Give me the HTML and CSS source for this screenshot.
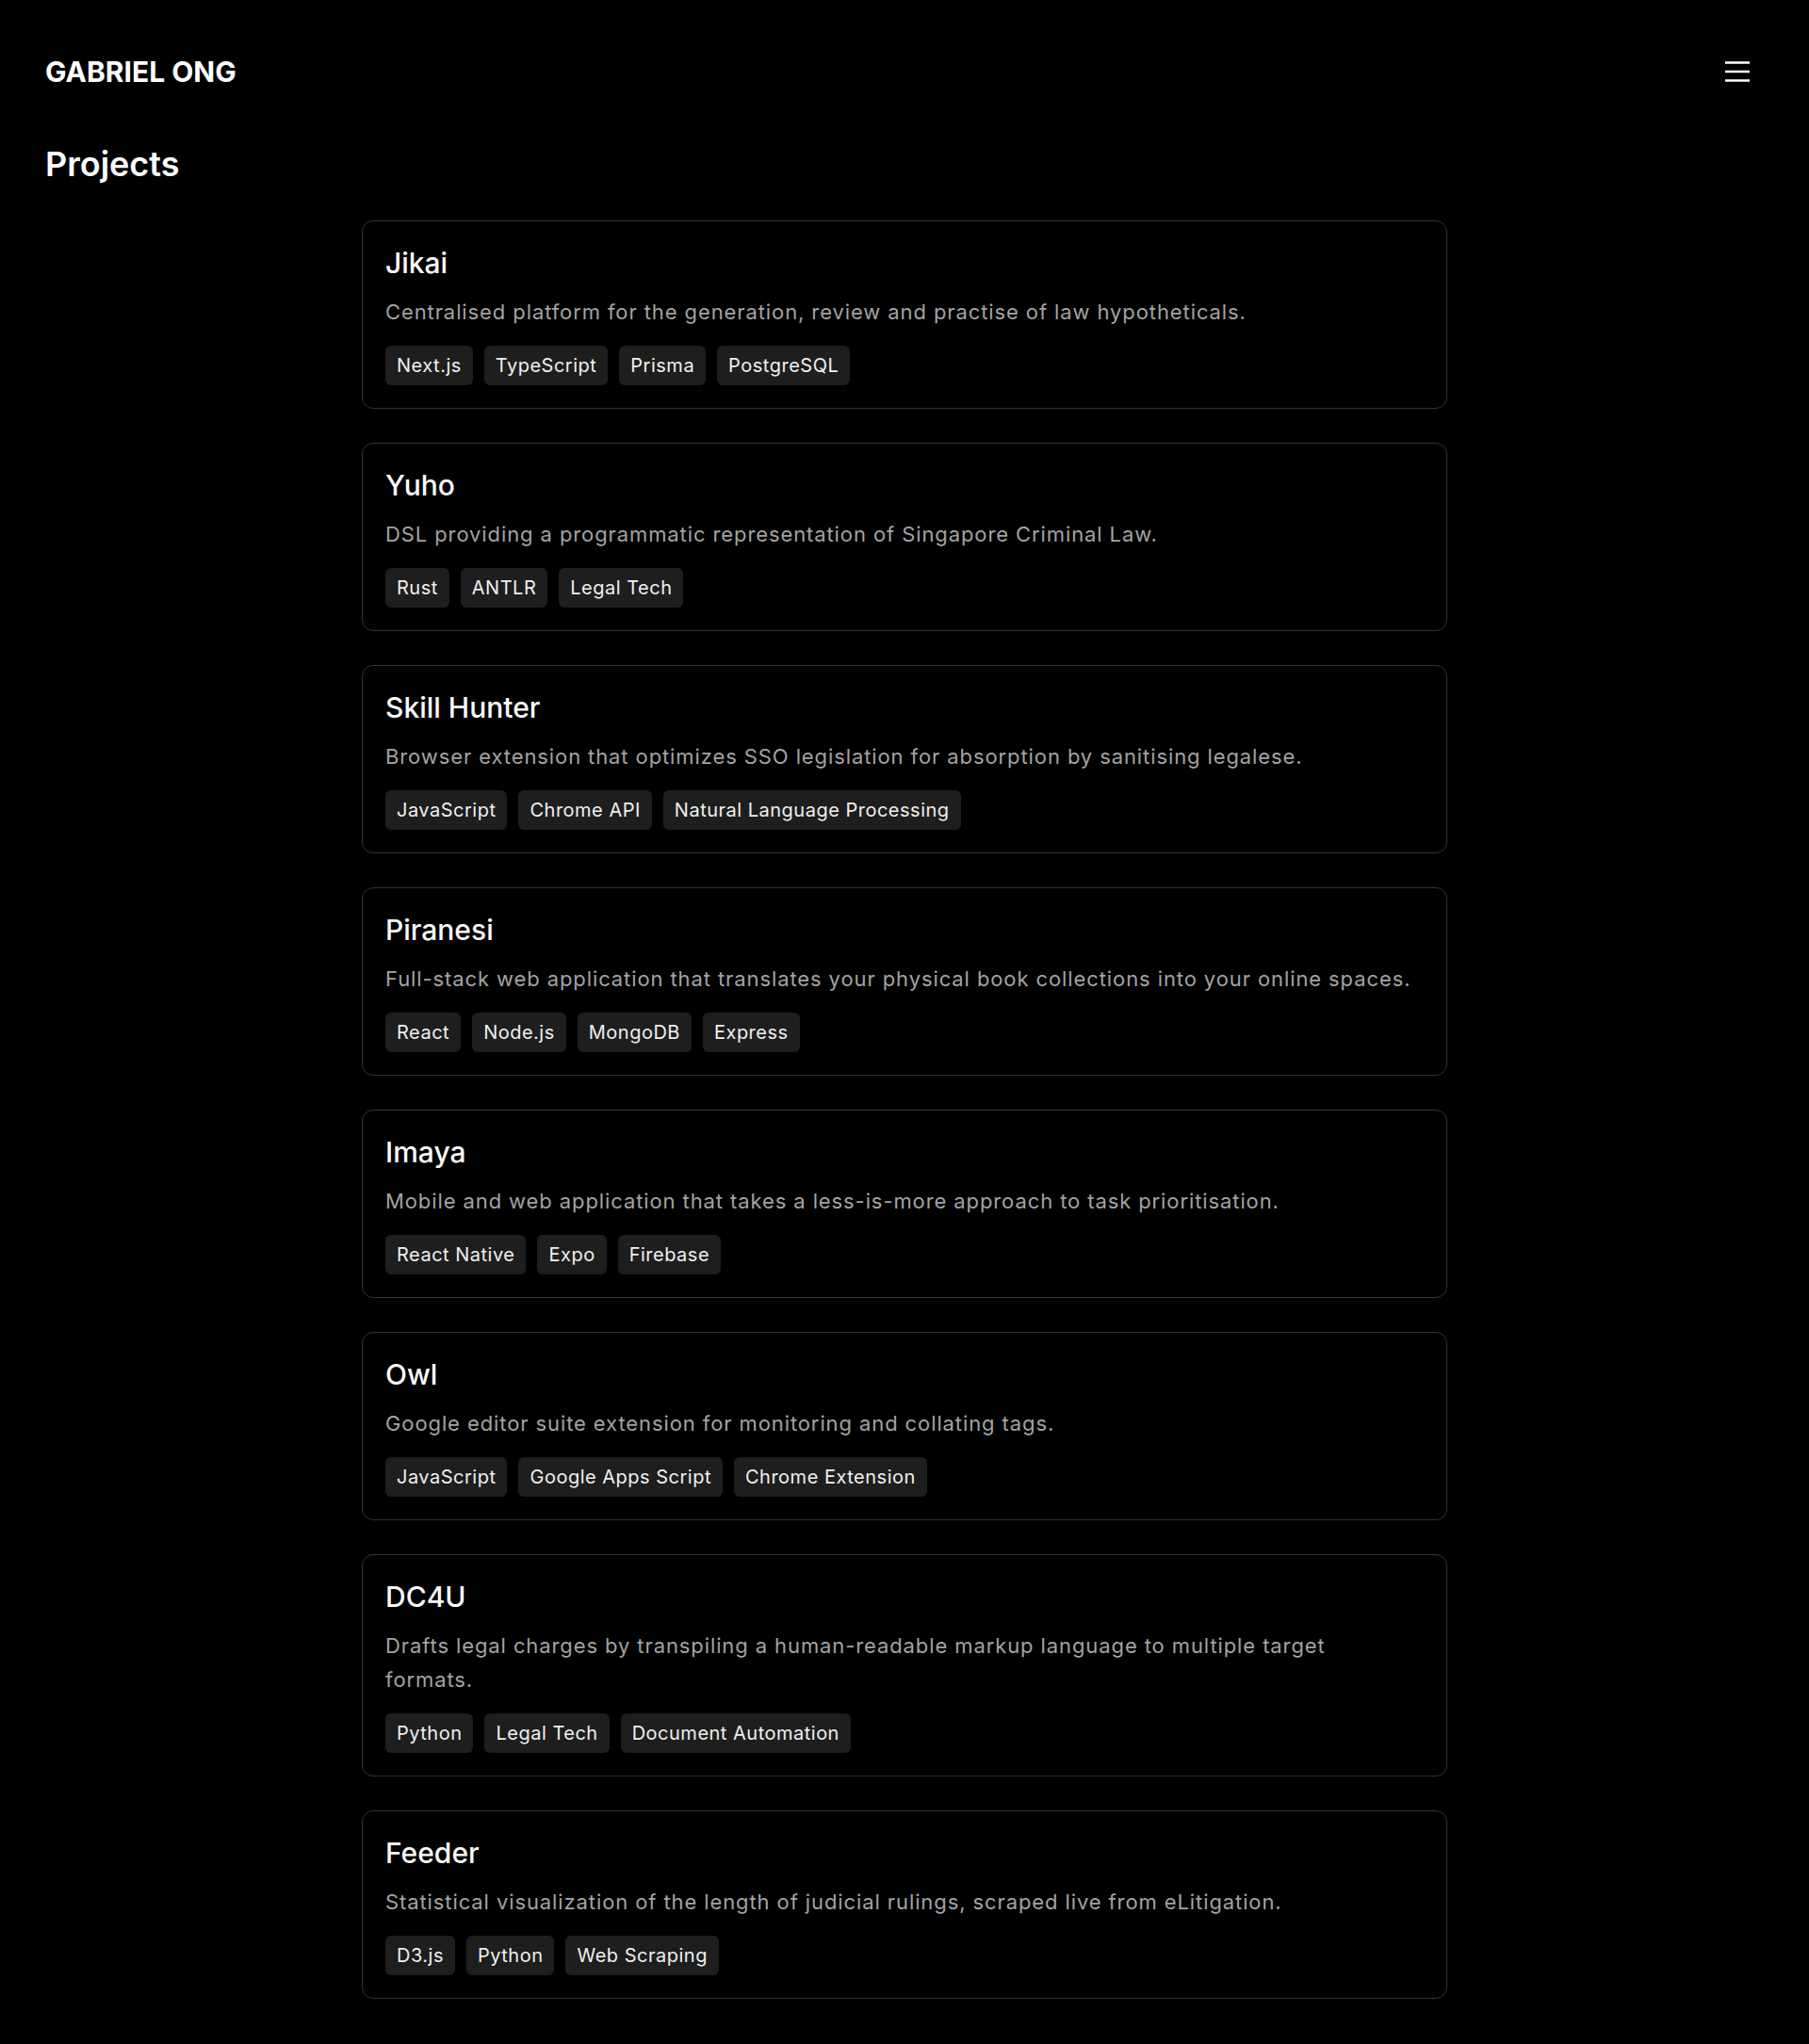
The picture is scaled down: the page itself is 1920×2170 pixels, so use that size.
FILE: index.html
```html
<!DOCTYPE html>
<html lang="en">
<head>
<meta charset="utf-8">
<title>Projects | Gabriel Ong</title>
<link rel="stylesheet" href="styles.css">
</head>
<body>
<header class="site-header">
  <a class="brand" href="#">GABRIEL ONG</a>
  <button class="menu-btn" aria-label="Open menu">
    <svg width="26" height="22" viewBox="0 0 26 22" fill="none" stroke="currentColor" stroke-width="2.5">
      <line x1="0" y1="1.5" x2="26" y2="1.5"/>
      <line x1="0" y1="11" x2="26" y2="11"/>
      <line x1="0" y1="20.5" x2="26" y2="20.5"/>
    </svg>
  </button>
</header>
<main class="page">
  <h1 class="page-title">Projects</h1>
  <section class="project-list">
    <article class="card">
      <h2 class="card-title">Jikai</h2>
      <p class="card-desc">Centralised platform for the generation, review and practise of law hypotheticals.</p>
      <ul class="tags"><li>Next.js</li><li>TypeScript</li><li>Prisma</li><li>PostgreSQL</li></ul>
    </article>
    <article class="card">
      <h2 class="card-title">Yuho</h2>
      <p class="card-desc">DSL providing a programmatic representation of Singapore Criminal Law.</p>
      <ul class="tags"><li>Rust</li><li>ANTLR</li><li>Legal Tech</li></ul>
    </article>
    <article class="card">
      <h2 class="card-title">Skill Hunter</h2>
      <p class="card-desc">Browser extension that optimizes SSO legislation for absorption by sanitising legalese.</p>
      <ul class="tags"><li>JavaScript</li><li>Chrome API</li><li>Natural Language Processing</li></ul>
    </article>
    <article class="card">
      <h2 class="card-title">Piranesi</h2>
      <p class="card-desc">Full-stack web application that translates your physical book collections into your online spaces.</p>
      <ul class="tags"><li>React</li><li>Node.js</li><li>MongoDB</li><li>Express</li></ul>
    </article>
    <article class="card">
      <h2 class="card-title">Imaya</h2>
      <p class="card-desc">Mobile and web application that takes a less-is-more approach to task prioritisation.</p>
      <ul class="tags"><li>React Native</li><li>Expo</li><li>Firebase</li></ul>
    </article>
    <article class="card">
      <h2 class="card-title">Owl</h2>
      <p class="card-desc">Google editor suite extension for monitoring and collating tags.</p>
      <ul class="tags"><li>JavaScript</li><li>Google Apps Script</li><li>Chrome Extension</li></ul>
    </article>
    <article class="card">
      <h2 class="card-title">DC4U</h2>
      <p class="card-desc">Drafts legal charges by transpiling a human-readable markup language to multiple target formats.</p>
      <ul class="tags"><li>Python</li><li>Legal Tech</li><li>Document Automation</li></ul>
    </article>
    <article class="card">
      <h2 class="card-title">Feeder</h2>
      <p class="card-desc">Statistical visualization of the length of judicial rulings, scraped live from eLitigation.</p>
      <ul class="tags"><li>D3.js</li><li>Python</li><li>Web Scraping</li></ul>
    </article>
  </section>
</main>
</body>
</html>
```

FILE: styles.css
```css
* { box-sizing: border-box; }

html, body {
  margin: 0;
  padding: 0;
  background: #000;
  color: #fafafa;
  font-family: Inter, "Noto Sans", "Liberation Sans", sans-serif;
}

.site-header {
  height: 151px;
  padding: 0 48px;
  display: flex;
  align-items: center;
  justify-content: space-between;
}

.brand {
  font-size: 30px;
  line-height: 36px;
  font-weight: 700;
  color: #fff;
  text-decoration: none;
}

.menu-btn {
  width: 56px;
  height: 52px;
  padding: 0;
  border: 0;
  background: transparent;
  color: #fff;
  display: flex;
  align-items: center;
  justify-content: center;
}

.page {
  padding: 0 48px 48px;
}

.page-title {
  margin: 3px 0 40px;
  font-size: 36px;
  line-height: 40px;
  font-weight: 600;
  color: #fff;
}

.project-list {
  max-width: 1152px;
  margin: 0 auto;
  display: flex;
  flex-direction: column;
  gap: 36px;
}

.card {
  border: 1px solid #333;
  border-radius: 12px;
  padding: 24px;
}

.card-title {
  margin: 0;
  font-size: 30px;
  line-height: 41px;
  font-weight: 500;
  color: #fafafa;
}

.card-desc {
  margin: 13px 0 0;
  max-width: 1090px;
  font-size: 22px;
  line-height: 36px;
  letter-spacing: 0.9px;
  color: #a3a3a3;
}

.tags {
  list-style: none;
  margin: 18px 0 0;
  padding: 0;
  display: flex;
  flex-wrap: wrap;
  gap: 12px;
}

.tags li {
  background: #1e1e1e;
  color: #f0f0f0;
  border-radius: 6px;
  padding: 6px 12px;
  font-size: 20px;
  line-height: 30px;
  letter-spacing: 0.5px;
}
```
